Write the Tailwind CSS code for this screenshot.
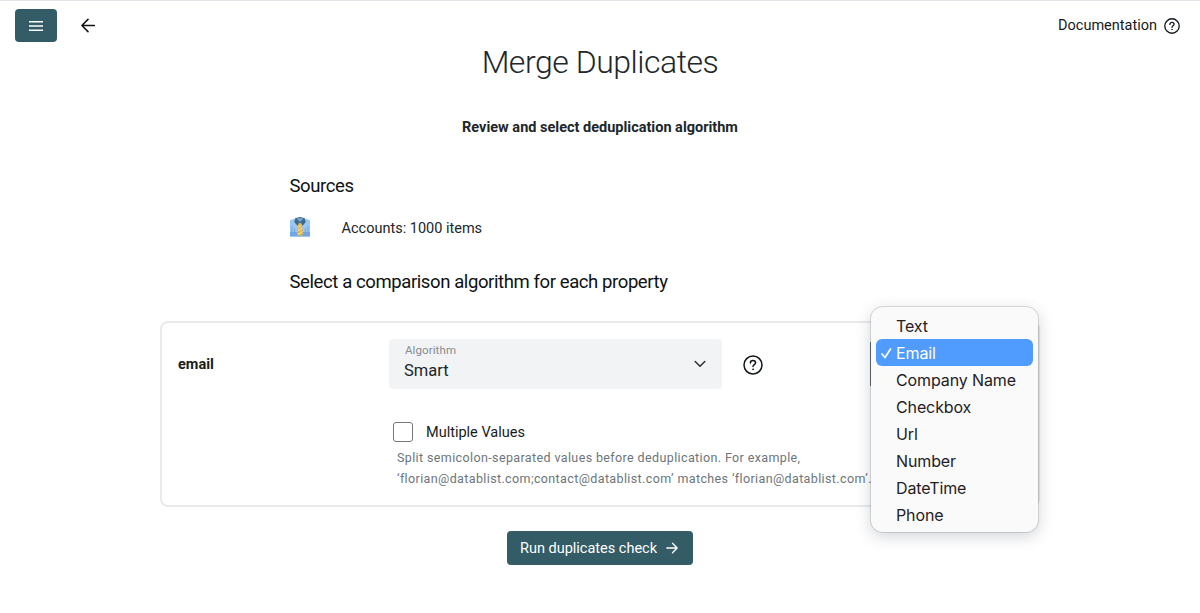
<!DOCTYPE html>
<html lang="en">
<head>
    <meta charset="UTF-8">
    <meta name="viewport" content="width=device-width, initial-scale=1.0">
    <title>Merge Duplicates</title>
    <script src="https://cdn.jsdelivr.net/npm/@tailwindcss/browser@4"></script>
</head>
<body class="bg-white h-[613px] overflow-hidden font-['Roboto',sans-serif] text-[#20262a] border-t border-[#e4e5ea]">
    <header class="h-[41px] flex items-start pl-[15px] pr-5">
        <button class="mt-2 w-[42px] h-[33px] rounded bg-[#335c67] flex items-center justify-center" aria-label="Menu">
            <svg class="w-[14px] h-[12px] text-white" viewBox="0 0 14 12" fill="none" stroke="currentColor" stroke-width="1.4">
                <path d="M0 1.7h14M0 6h14M0 10.3h14"/>
            </svg>
        </button>
        <a href="#" class="mt-[17px] ml-6 text-[#111]" aria-label="Back">
            <svg class="w-[14px] h-[15px]" viewBox="0 0 14 15" fill="none" stroke="currentColor" stroke-width="1.5" stroke-linecap="round" stroke-linejoin="round">
                <path d="M13.4 7.5H.9M7 1.4L.9 7.5L7 13.6"/>
            </svg>
        </a>
        <a href="#" class="mt-3 ml-auto flex items-center text-[#15191c]">
            <span class="pt-[3px] text-[14.5px] leading-5">Documentation</span>
            <svg class="ml-[7px] mt-[2px] w-4 h-4" viewBox="0 0 20 20" fill="none" stroke="currentColor" stroke-width="1.7" stroke-linecap="round">
                <circle cx="10" cy="10" r="9"/>
                <path d="M7.4 8c0-1.5 1.1-2.5 2.6-2.5s2.6.9 2.6 2.3c0 1.9-2.6 1.8-2.6 3.8"/>
                <circle cx="10" cy="14.3" r=".5" fill="currentColor" stroke-width=".8"/>
            </svg>
        </a>
    </header>

    <h1 class="text-center text-[32px] leading-10 font-light tracking-[-0.47px]">Merge Duplicates</h1>
    <p class="mt-9 text-center text-[14.5px] leading-5 font-bold">Review and select deduplication algorithm</p>

    <section class="mt-9 ml-[289.5px]">
        <h2 class="text-[18.5px] leading-6 tracking-[-0.4px] text-[#0d1114]">Sources</h2>
        <div class="mt-[17px] h-6 flex items-center">
            <svg class="w-5 h-5" viewBox="0 0 20 20">
                <path d="M0 4Q.2 2.800 1.500 2.600L6 1.500h8l4.500 1.100Q19.800 2.800 20 4V19.500H0z" fill="#9cc6f4"/>
                <path d="M0 15h20v4.5H0z" fill="#74a9e6"/>
                <path d="M2 9v10M4.6 11v8M15.4 11v8M18 9v10" stroke="#6b9fdd" stroke-width=".9"/>
                <path d="M5.5 1L10 0l4.5 1l1.3 4L12.500 8.800L10 5.500L7.500 8.800L4.200 5z" fill="#3f6b87"/>
                <path d="M6.5 1.2h7L10 5z" fill="#79a9d6"/>
                <path d="M8.3 6.500h3.400l1.300 10.500l-3 2.500l-3-2.500z" fill="#e3b448"/>
                <path d="M8.2 10.500l3-2M8 14l4-3M8 17.500l4.500-3" stroke="#fff0bb" stroke-width=".9"/>
            </svg>
            <span class="pt-[3px] ml-8 text-[14.5px] leading-5">Accounts: 1000 items</span>
        </div>
        <h2 class="mt-[31px] text-[18.5px] leading-6 tracking-[-0.4px] text-[#0d1114]">Select a comparison algorithm for each property</h2>
    </section>

    <section class="relative mt-[27px] mx-auto w-[880px] h-[186px] flex border-2 border-[#e8eaec] rounded-lg">
        <div class="w-[227px] pl-4 pt-8 text-[14.5px] leading-5 font-bold text-[#171c20]">email</div>
        <div class="pt-4">
            <div class="flex items-start">
                <div class="w-[333px] h-[50px] rounded bg-[#f2f3f5] flex items-center pl-4 pr-4">
                    <div class="flex-1 -mt-0.5">
                        <div class="text-[11.5px] leading-[15px] tracking-[0.1px] text-[#858c92]">Algorithm</div>
                        <div class="text-[16.5px] leading-[26px] -ml-px">Smart</div>
                    </div>
                    <svg class="w-3 h-2" viewBox="0 0 12 8" fill="none" stroke="#2b3034" stroke-width="1.5" stroke-linecap="round" stroke-linejoin="round">
                        <path d="M1.2 1.5L6 6.2L10.8 1.5"/>
                    </svg>
                </div>
                <svg class="mt-4 ml-[21px] w-5 h-5" viewBox="0 0 20 20" fill="none" stroke="#111619" stroke-width="1.5" stroke-linecap="round">
                    <circle cx="10" cy="10" r="9"/>
                    <path d="M7.4 8c0-1.5 1.1-2.5 2.6-2.5s2.6.9 2.6 2.3c0 1.9-2.6 1.8-2.6 3.8"/>
                    <circle cx="10" cy="14.3" r=".5" fill="#111619" stroke-width=".8"/>
                </svg>
            </div>
            <label class="mt-[33px] ml-1 flex items-center">
                <input type="checkbox" class="appearance-none w-5 h-5 border border-[#73787d] rounded-[3px] bg-white">
                <span class="ml-[13px] h-5 text-[14.5px] leading-[22px] text-[#171c20]">Multiple Values</span>
            </label>
            <p class="mt-[5px] ml-2 text-[12.5px] leading-[21px] tracking-[0.38px] text-[#6c757b] whitespace-nowrap">Split semicolon-separated values before deduplication. For example,<br>‘florian@datablist.com;contact@datablist.com’ matches ‘florian@datablist.com’.</p>
        </div>

        <div class="absolute left-[708px] top-[19px] w-4 h-[44px] border-l border-[#6b7075]"></div>

        <ul class="absolute left-[709px] -top-4 w-[167px] h-[225px] pt-[5px] px-[5px] rounded-xl bg-[#fafafb] shadow-[0_0_0_1px_rgba(0,0,0,0.12),0_4px_16px_rgba(40,50,70,0.22)] font-['Inter',sans-serif] text-[16px] leading-[28px] tracking-[-0.12px] text-[#1f2123]">
            <li class="h-[27px] pl-5">Text</li>
            <li class="h-[27px] pl-[5px] flex items-center rounded-md bg-[#4f9bfe] text-white">
                <svg class="w-[11px] h-3 mr-1" viewBox="0 0 11 12" fill="none" stroke="currentColor" stroke-width="1.7" stroke-linecap="round" stroke-linejoin="round">
                    <path d="M1 7L4 10.5L9.5 2"/>
                </svg>
                <span class="h-[27px]">Email</span>
            </li>
            <li class="h-[27px] pl-5 whitespace-nowrap">Company Name</li>
            <li class="h-[27px] pl-5">Checkbox</li>
            <li class="h-[27px] pl-5">Url</li>
            <li class="h-[27px] pl-5">Number</li>
            <li class="h-[27px] pl-5">DateTime</li>
            <li class="h-[27px] pl-5">Phone</li>
        </ul>
    </section>

    <button class="mt-6 mx-auto w-[186px] h-[34px] pr-[2px] flex items-center justify-center rounded bg-[#335c67] text-white text-[14.5px]">
        <span class="pt-px">Run duplicates check</span>
        <svg class="ml-[9px] w-3 h-3" viewBox="0 0 12 12" fill="none" stroke="currentColor" stroke-width="1.3" stroke-linecap="round" stroke-linejoin="round">
            <path d="M.8 6h10.4M6.5 1.3L11.2 6L6.5 10.7"/>
        </svg>
    </button>
</body>
</html>
